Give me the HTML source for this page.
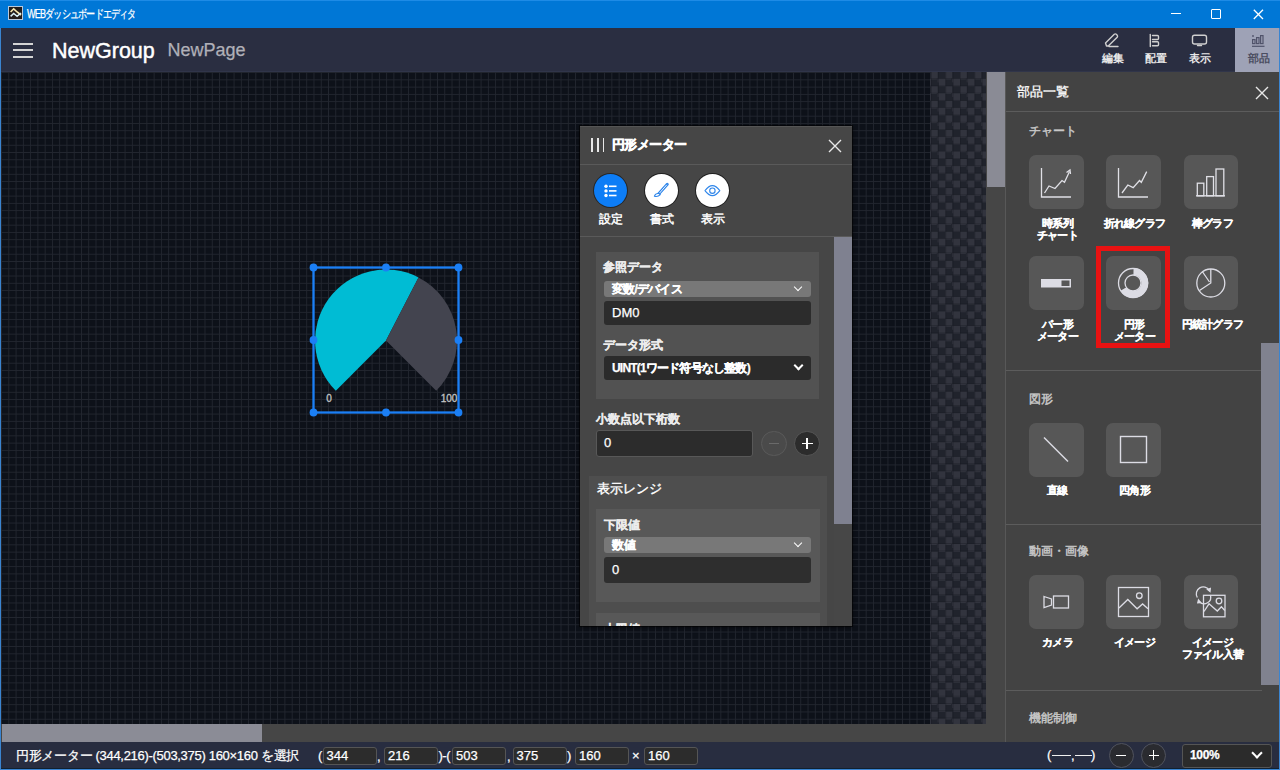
<!DOCTYPE html>
<html lang="ja">
<head>
<meta charset="utf-8">
<style>
*{box-sizing:border-box;margin:0;padding:0}
html,body{width:1280px;height:770px;overflow:hidden;background:#3a84d0}
body{position:relative;font-family:"Liberation Sans",sans-serif;color:#fff;-webkit-text-stroke-width:0.25px}
.a{position:absolute}
/* title bar */
#tb{left:0;top:0;width:1280px;height:28px;background:#0077d6;box-shadow:inset 0 1px 0 #1e8be6}
/* app bar */
#ab{left:1px;top:28px;width:1278px;height:44px;background:#2a2e41;box-shadow:inset 0 -1px 0 #30354a}
/* canvas */
#cv{left:1px;top:72px;width:929px;height:652px;background-color:#0d1119;
 background-image:linear-gradient(90deg,#22262f 1px,transparent 1px),linear-gradient(0deg,#22262f 1px,transparent 1px);
 background-size:7.28px 7.28px;background-position:0.1px 8.3px}
#chk{left:930px;top:72px;width:56px;height:652px;background-color:#1f222b;
 background-image:linear-gradient(90deg,rgba(20,22,30,.35) 1px,transparent 1px),linear-gradient(0deg,rgba(20,22,30,.35) 1px,transparent 1px),conic-gradient(#20232c 25%,#32343e 0 50%,#20232c 0 75%,#32343e 0);
 background-size:7.28px 7.28px,7.28px 7.28px,14.56px 14.56px;background-position:0.9px 0,0 7.0px,0.9px -0.3px}
#hsb{left:1px;top:724px;width:1004px;height:18px;background:#464646}
#hth{left:2px;top:724px;width:260px;height:18px;background:#8b8c96}
#vsb{left:986px;top:72px;width:19px;height:652px;background:#464646}
#vth{left:987px;top:72px;width:18px;height:115px;background:#8a8b95}
/* status bar */
#sb{left:1px;top:742px;width:1278px;height:26px;background:#282d40;box-shadow:0 1px 0 #102030}
/* right panel */
#rp{left:1005px;top:72px;width:274px;height:670px;background:#434343;border-left:1px solid #585858}
.sep{position:absolute;height:1px;background:#5c5c5c}
.sec{position:absolute;font-size:12px;color:#c8c8c8;letter-spacing:0px;-webkit-text-stroke-width:0.45px}
.tile{position:absolute;width:54.5px;height:54px;border-radius:7px;background:#575757}
.tl{position:absolute;width:80px;text-align:center;font-size:10.5px;font-weight:bold;line-height:12.3px;color:#fff;letter-spacing:-0.8px;margin-left:1.5px;margin-top:0.5px}
/* dialog */
#dlg{left:580px;top:126px;width:272px;height:500px;background:#464646;overflow:hidden;box-shadow:0 0 0 1px rgba(0,0,0,.55),0 1px 5px rgba(0,0,0,.7),inset 0 1px 0 #555}
.grp{position:absolute}
.lbl{position:absolute;font-size:12px;color:#ececec;font-weight:bold;margin-top:1px}
.sel{position:absolute;border-radius:3px}
.inp{position:absolute;border-radius:3px;background:#2c2c2c}
.sin{position:absolute;top:747px;width:54px;height:18px;background:#2c2c2c;border:1px solid #555;border-radius:3px;font-size:13px;line-height:16px;color:#fff;padding-left:3px}
.chev{position:absolute;width:7px;height:7px;border-right:1.6px solid #fff;border-bottom:1.6px solid #fff;transform:rotate(45deg)}
</style>
</head>
<body>
<div id="tb" class="a"></div>
<!-- app icon -->
<div class="a" style="left:8px;top:6px;width:14.5px;height:13.5px;background:#221d1c;border:1px solid #b8c8dc"></div>
<svg class="a" style="left:8px;top:6px" width="15" height="14" viewBox="8 6 15 14"><polyline points="10.6,12 13.7,8.8 17.1,12 21,15" fill="none" stroke="#f6e8b0" stroke-width="1.6"/><polyline points="10.6,16.3 13.7,13.5 17.1,16.3 21,13" fill="none" stroke="#d8f0f8" stroke-width="1.6"/></svg>
<div class="a" style="left:27px;top:7px;font-size:12px;line-height:14px;color:#fff;letter-spacing:-1.1px;white-space:nowrap;transform:scaleX(0.755);transform-origin:0 0">WEBダッシュボードエディタ</div>
<!-- window controls -->
<div class="a" style="left:1171px;top:13px;width:9.5px;height:1.4px;background:#fff"></div>
<div class="a" style="left:1211.3px;top:9.2px;width:9.6px;height:9.6px;border:1.3px solid #fff;border-radius:1px"></div>
<svg class="a" style="left:1253px;top:9px" width="11" height="11" viewBox="0 0 11 11"><path d="M0.8,0.8 L10,10 M10,0.8 L0.8,10" stroke="#fff" stroke-width="1.3"/></svg>

<div id="ab" class="a"></div>
<!-- hamburger -->
<div class="a" style="left:13px;top:42.5px;width:20px;height:2px;background:#d4d4d4"></div>
<div class="a" style="left:13px;top:49px;width:20px;height:2px;background:#d4d4d4"></div>
<div class="a" style="left:13px;top:55.5px;width:20px;height:2px;background:#d4d4d4"></div>
<div class="a" style="left:52px;top:38.5px;font-size:21.5px;line-height:25px;color:#fff;white-space:nowrap;-webkit-text-stroke-width:0.45px">NewGroup</div>
<div class="a" style="left:167.5px;top:40px;font-size:18px;line-height:21px;color:#b0b0b8;white-space:nowrap">NewPage</div>
<!-- toolbar buttons -->
<div class="a" style="left:1235px;top:28px;width:44px;height:44px;background:#9ea2b6"></div>
<svg class="a" style="left:1100px;top:32px" width="180" height="18" viewBox="1100 32 180 18">
 <g fill="none" stroke="#cfcfcf" stroke-width="1.4" stroke-linecap="round" stroke-linejoin="round">
  <path d="M1106.5,46 L1105.5,43 L1114.3,34.3 Q1115.3,33.5 1116.3,34.3 L1117.2,35.2 Q1118,36.2 1117.2,37.2 L1108.5,45.8 Z M1109,46.5 L1118,46.5"/>
  <path d="M1150.3,34.5 L1150.3,46.5"/>
  <path d="M1152.5,35.5 L1157.5,35.5 Q1158.5,35.5 1158.5,36.5 L1158.5,38.5 Q1158.5,39.5 1157.5,39.5 L1152.5,39.5 M1152.5,41.8 L1157.5,41.8 Q1158.5,41.8 1158.5,42.8 L1158.5,44.8 Q1158.5,45.8 1157.5,45.8 L1152.5,45.8"/>
  <rect x="1192.5" y="35.3" width="14" height="8.7" rx="2"/>
  <path d="M1197.5,45.5 L1201.5,45.5"/>
 </g>
 <g fill="none" stroke="#50536a" stroke-width="1.2">
  <circle cx="1253" cy="36" r="0.9" fill="#50536a" stroke="none"/>
  <rect x="1252.6" y="39.6" width="2.4" height="4"/>
  <rect x="1256.6" y="37.6" width="2.4" height="6"/>
  <rect x="1260.6" y="35.6" width="2.4" height="8"/>
  <path d="M1252,46.3 L1264.5,46.3"/>
 </g>
</svg>
<div class="a" style="left:1101.5px;top:51.5px;font-size:10.5px;line-height:13px;color:#e8e8e8;font-weight:bold;white-space:nowrap;-webkit-text-stroke-width:0">編集</div>
<div class="a" style="left:1145px;top:51.5px;font-size:10.5px;line-height:13px;color:#e8e8e8;font-weight:bold;white-space:nowrap;-webkit-text-stroke-width:0">配置</div>
<div class="a" style="left:1189px;top:51.5px;font-size:10.5px;line-height:13px;color:#e8e8e8;font-weight:bold;white-space:nowrap;-webkit-text-stroke-width:0">表示</div>
<div class="a" style="left:1247.5px;top:51.5px;font-size:10.5px;line-height:13px;color:#4a4d60;font-weight:bold;white-space:nowrap;-webkit-text-stroke-width:0">部品</div>

<!-- canvas -->
<div id="cv" class="a"></div>
<div id="chk" class="a"></div>
<div id="hsb" class="a"></div>
<div id="hth" class="a"></div>
<div id="vsb" class="a"></div>
<div id="vth" class="a"></div>

<!-- gauge -->
<svg class="a" style="left:300px;top:255px" width="175" height="175" viewBox="300 255 175 175">
 <path d="M386,340.5 L335.8,390.7 A71,71 0 0 1 418.5,277.4 Z" fill="#00bcd4"/>
 <path d="M386,340.5 L418.5,277.4 A71,71 0 0 1 436.2,390.7 Z" fill="#43444f"/>
 <text x="329" y="402" font-family="Liberation Sans" font-size="10" fill="#c4c4c4" stroke="#c4c4c4" stroke-width="0.3" text-anchor="middle">0</text>
 <text x="449" y="402" font-family="Liberation Sans" font-size="10" fill="#c4c4c4" stroke="#c4c4c4" stroke-width="0.3" text-anchor="middle">100</text>
 <rect x="313.5" y="267.5" width="145" height="145" fill="none" stroke="#1b7ff5" stroke-width="2.3"/>
 <g fill="#1b7ff5">
  <circle cx="313.5" cy="267.5" r="3.9"/><circle cx="386" cy="267.5" r="3.9"/><circle cx="458.5" cy="267.5" r="3.9"/>
  <circle cx="313.5" cy="340" r="3.9"/><circle cx="458.5" cy="340" r="3.9"/>
  <circle cx="313.5" cy="412.5" r="3.9"/><circle cx="386" cy="412.5" r="3.9"/><circle cx="458.5" cy="412.5" r="3.9"/>
 </g>
</svg>

<!-- status bar -->
<div id="sb" class="a"></div>
<div class="a" style="left:16px;top:748px;font-size:13px;line-height:15px;color:#fff;white-space:nowrap;letter-spacing:-0.3px">円形メーター (344,216)-(503,375) 160×160 を選択</div>
<div class="a" style="left:318px;top:748px;font-size:13px;line-height:15px;color:#fff">(</div>
<div class="sin" style="left:322.5px">344</div>
<div class="a" style="left:377px;top:749px;font-size:13px;line-height:15px;color:#fff">,</div>
<div class="sin" style="left:384px">216</div>
<div class="a" style="left:438.5px;top:748px;font-size:13px;line-height:15px;color:#fff;letter-spacing:-0.5px">)-(</div>
<div class="sin" style="left:452px">503</div>
<div class="a" style="left:507px;top:749px;font-size:13px;line-height:15px;color:#fff">,</div>
<div class="sin" style="left:512.5px">375</div>
<div class="a" style="left:567px;top:748px;font-size:13px;line-height:15px;color:#fff">)</div>
<div class="sin" style="left:575px">160</div>
<div class="a" style="left:632px;top:748px;font-size:13px;line-height:15px;color:#fff">×</div>
<div class="sin" style="left:644px">160</div>
<div class="a" style="left:1047px;top:747px;font-size:13px;line-height:15px;color:#fff;white-space:nowrap">(</div>
<div class="a" style="left:1052px;top:755.2px;width:19px;height:1.3px;background:#f0f0f0"></div>
<div class="a" style="left:1071px;top:748px;font-size:13px;line-height:15px;color:#fff">,</div>
<div class="a" style="left:1074.5px;top:755.2px;width:17px;height:1.3px;background:#f0f0f0"></div>
<div class="a" style="left:1091px;top:747px;font-size:13px;line-height:15px;color:#fff">)</div>
<div class="a" style="left:1108.5px;top:742.5px;width:25px;height:25px;border-radius:50%;background:#2a2b30;border:1.5px solid #50535e"></div>
<div class="a" style="left:1116px;top:754.5px;width:10px;height:1.6px;background:#fff"></div>
<div class="a" style="left:1141px;top:742.5px;width:25px;height:25px;border-radius:50%;background:#2a2b30;border:1.5px solid #50535e"></div>
<div class="a" style="left:1148.5px;top:754.5px;width:10px;height:1.6px;background:#fff"></div>
<div class="a" style="left:1152.7px;top:750.3px;width:1.6px;height:10px;background:#fff"></div>
<div class="a" style="left:1181.5px;top:743.5px;width:90px;height:24.5px;background:#2b2b2b;border:1px solid #555;border-radius:3px"></div>
<div class="a" style="left:1190px;top:748px;font-size:12px;line-height:15px;color:#fff;font-weight:bold;letter-spacing:-0.3px">100%</div>
<div class="chev" style="left:1253px;top:749px;width:8px;height:8px;border-width:0 2px 2px 0"></div>

<!-- right panel -->
<div id="rp" class="a"></div>
<div class="a" style="left:1017px;top:84px;font-size:13px;line-height:16px;color:#fff;white-space:nowrap;-webkit-text-stroke-width:0.3px">部品一覧</div>
<svg class="a" style="left:1255px;top:86px" width="14" height="14" viewBox="0 0 14 14"><path d="M1,1 L13,13 M13,1 L1,13" stroke="#e8e8e8" stroke-width="1.4"/></svg>
<div class="sep" style="left:1006px;top:111px;width:273px"></div>
<div class="sec" style="left:1029px;top:124px;line-height:14px">チャート</div>
<div class="tile" style="left:1029px;top:155px"></div>
<div class="tile" style="left:1106px;top:155px"></div>
<div class="tile" style="left:1183.5px;top:155px"></div>
<svg class="a" style="left:1029px;top:155px" width="210" height="55" viewBox="1029 155 210 55">
 <g fill="none" stroke="#e0e0e6" stroke-width="1.3">
  <path d="M1041.5,168 L1041.5,197 L1071,197"/>
  <path d="M1044.5,193 L1049,186 L1055,188.5 L1062,180.5 L1064.5,182.3 L1069.5,171.5"/>
  <path d="M1066.5,172.5 L1070,170 L1070.5,174"/>
  <path d="M1118.5,168 L1118.5,197 L1148,197"/>
  <path d="M1122,193 L1127.8,185 L1133.2,187.7 L1139.5,180.5 L1141.3,182.3 L1146.7,171.6"/>
  <path d="M1196,195.8 L1225,195.8"/>
  <rect x="1197.3" y="183.2" width="6.5" height="12.6"/>
  <rect x="1206.7" y="176.6" width="6.8" height="19.2"/>
  <rect x="1216" y="169" width="7.8" height="26.8"/>
 </g>
</svg>
<div class="tl" style="left:1016px;top:216px">時系列<br>チャート</div>
<div class="tl" style="left:1093px;top:216px">折れ線グラフ</div>
<div class="tl" style="left:1171px;top:216px">棒グラフ</div>

<div class="tile" style="left:1029px;top:256px"></div>
<div class="tile" style="left:1106px;top:256px"></div>
<div class="tile" style="left:1183.5px;top:256px"></div>
<svg class="a" style="left:1029px;top:256px" width="210" height="55" viewBox="1029 256 210 55">
 <rect x="1041" y="279" width="30" height="8.5" fill="#dcdce4"/>
 <rect x="1061.5" y="280.5" width="8" height="5.5" fill="#575757"/>
 <circle cx="1133" cy="283" r="14.5" fill="none" stroke="#dcdce4" stroke-width="1.3"/>
 <circle cx="1133" cy="283" r="8" fill="none" stroke="#dcdce4" stroke-width="1.3"/>
 <path d="M1133.5,271.5 A11.5,11.5 0 1 1 1123.5,289" fill="none" stroke="#dcdce4" stroke-width="7"/>
 <circle cx="1210.8" cy="283" r="14" fill="none" stroke="#dcdce4" stroke-width="1.3"/>
 <path d="M1210.8,269 L1210.8,283 L1199.5,290.5 M1202.3,271.5 L1209.5,282" fill="none" stroke="#dcdce4" stroke-width="1.3"/>
</svg>
<div class="tl" style="left:1016px;top:317px">バー形<br>メーター</div>
<div class="tl" style="left:1093px;top:317px">円形<br>メーター</div>
<div class="tl" style="left:1171px;top:317px">円統計グラフ</div>
<div class="a" style="left:1095.5px;top:246px;width:74.5px;height:102px;border:5px solid #e81212"></div>

<div class="sep" style="left:1006px;top:370px;width:256px"></div>
<div class="sec" style="left:1029px;top:392px;line-height:14px">図形</div>
<div class="tile" style="left:1029px;top:422.5px"></div>
<div class="tile" style="left:1106px;top:422.5px"></div>
<svg class="a" style="left:1029px;top:422px" width="140" height="56" viewBox="1029 422 140 56">
 <path d="M1044,437.5 L1068,461.5" stroke="#dcdce4" stroke-width="1.4"/>
 <rect x="1120.5" y="436.5" width="26" height="26" fill="none" stroke="#dcdce4" stroke-width="1.4"/>
</svg>
<div class="tl" style="left:1016px;top:483px">直線</div>
<div class="tl" style="left:1093px;top:483px">四角形</div>

<div class="sep" style="left:1006px;top:524px;width:256px"></div>
<div class="sec" style="left:1029px;top:544px;line-height:14px">動画・画像</div>
<div class="tile" style="left:1029px;top:574.5px"></div>
<div class="tile" style="left:1106px;top:574.5px"></div>
<div class="tile" style="left:1183.5px;top:574.5px"></div>
<svg class="a" style="left:1029px;top:574px" width="210" height="56" viewBox="1029 574 210 56">
 <g fill="none" stroke="#dcdce4" stroke-width="1.3">
  <path d="M1044,596.5 L1051.5,599 L1051.5,605 L1044,607.5 Z"/>
  <rect x="1053.5" y="596" width="15" height="12"/>
  <rect x="1118.5" y="587.5" width="30" height="29"/>
  <path d="M1119,608 L1127.8,599.5 L1137.1,608.8 L1142.6,603.9 L1148,608.8"/>
  <circle cx="1139.3" cy="595.7" r="2.8"/>
  <rect x="1203.5" y="595.3" width="21.5" height="21.5"/>
  <path d="M1204,611.5 L1209,603.8 L1217.3,611 L1221.4,606.8 L1224.8,610.5"/>
  <circle cx="1219" cy="601" r="2.8"/>
  <path d="M1197.3,597.5 A6.5,6.5 0 0 1 1209.3,590.3"/>
  <path d="M1210.3,595 A6.5,6.5 0 0 1 1199.3,601.5"/>
  <path d="M1207.5,589.5 L1210.3,588.5 L1210,591.5 Z M1200.5,602.5 L1197.8,602.8 L1198.5,600 Z" fill="#dcdce4"/>
 </g>
</svg>
<div class="tl" style="left:1016px;top:635px">カメラ</div>
<div class="tl" style="left:1093px;top:635px">イメージ</div>
<div class="tl" style="left:1171px;top:635px">イメージ<br>ファイル入替</div>
<div class="sep" style="left:1006px;top:690px;width:256px"></div>
<div class="sec" style="left:1029px;top:711px;line-height:14px">機能制御</div>
<div class="a" style="left:1261px;top:343px;width:18px;height:342px;background:#80828f"></div>

<!-- dialog -->
<div id="dlg" class="a">
 <!-- coordinates inside dialog: subtract (580,126) -->
 <div class="a" style="left:11.3px;top:12px;width:1.6px;height:14px;background:#e8e8e8"></div>
 <div class="a" style="left:17px;top:12px;width:1.6px;height:14px;background:#e8e8e8"></div>
 <div class="a" style="left:22.7px;top:12px;width:1.6px;height:14px;background:#e8e8e8"></div>
 <div class="a" style="left:32px;top:11px;font-size:13px;line-height:16px;font-weight:bold;color:#fff;white-space:nowrap;letter-spacing:-0.6px;-webkit-text-stroke:0.5px #fff">円形メーター</div>
 <svg class="a" style="left:248px;top:13px" width="14" height="14" viewBox="0 0 14 14"><path d="M1,1 L13,13 M13,1 L1,13" stroke="#e8e8e8" stroke-width="1.4"/></svg>
 <div class="a" style="left:0;top:38px;width:272px;height:1px;background:#5a5a5a"></div>
 <!-- tabs -->
 <div class="a" style="left:14px;top:48px;width:33px;height:33px;border-radius:50%;background:#0d7df6;box-shadow:0 0 0 1px rgba(0,0,0,.45)"></div>
 <div class="a" style="left:64.5px;top:48px;width:33px;height:33px;border-radius:50%;background:#fff;box-shadow:0 0 0 1px rgba(0,0,0,.55)"></div>
 <div class="a" style="left:115.5px;top:48px;width:33px;height:33px;border-radius:50%;background:#fff;box-shadow:0 0 0 1px rgba(0,0,0,.55)"></div>
 <svg class="a" style="left:14px;top:48px" width="140" height="33" viewBox="0 0 140 33">
  <g fill="#fff"><circle cx="12" cy="12.3" r="1.7"/><circle cx="12" cy="16.9" r="1.7"/><circle cx="12" cy="21.5" r="1.7"/>
  <rect x="15" y="11.5" width="7.5" height="1.6"/><rect x="15" y="16.1" width="7.5" height="1.6"/><rect x="15" y="20.7" width="7.5" height="1.6"/></g>
  <g fill="none" stroke="#2f86ea" stroke-width="1.1" stroke-linejoin="round">
  <path d="M73.3,10.3 L64.8,19.8" stroke-width="3" stroke-linecap="round"/>
  <path d="M72.8,10.8 L65.3,19.3" stroke="#fff" stroke-width="0.9"/>
  <path d="M64.5,19.2 Q61.2,19.6 60.4,22.2 Q63.6,23.4 66.3,20.6 Z" fill="#fff"/>
  <path d="M111,16.6 Q118.4,6.6 125.8,16.6 Q118.4,26.6 111,16.6 Z"/><circle cx="118.4" cy="16.7" r="2.7"/></g>
 </svg>
 <div class="a" style="left:19px;top:86px;font-size:12px;line-height:14px;color:#fff;white-space:nowrap;-webkit-text-stroke-width:0.45px">設定</div>
 <div class="a" style="left:69.5px;top:86px;font-size:12px;line-height:14px;color:#fff;white-space:nowrap;-webkit-text-stroke-width:0.45px">書式</div>
 <div class="a" style="left:120.5px;top:86px;font-size:12px;line-height:14px;color:#fff;white-space:nowrap;-webkit-text-stroke-width:0.45px">表示</div>
 <div class="a" style="left:0;top:110px;width:272px;height:1px;background:#5a5a5a"></div>
 <!-- scrollbar -->
 <div class="a" style="left:254px;top:111px;width:18px;height:389px;background:#474747"></div>
 <div class="a" style="left:254px;top:111px;width:18px;height:287px;background:#7f8190"></div>
 <!-- group 1 -->
 <div class="a" style="left:15.5px;top:125.5px;width:223.5px;height:147px;background:#525252"></div>
 <div class="lbl" style="left:23px;top:133px;line-height:14px">参照データ</div>
 <div class="sel" style="left:24px;top:155px;width:207px;height:15.5px;background:#787878"></div>
 <div class="a" style="left:32px;top:155px;font-size:12px;line-height:16px;color:#fff;white-space:nowrap;letter-spacing:-0.8px;font-weight:bold">変数/デバイス</div>
 <div class="chev" style="left:215px;top:157.5px;width:6px;height:6px;border-width:0 1.8px 1.8px 0"></div>
 <div class="inp" style="left:24px;top:175px;width:207px;height:23.5px;background:#2c2c2c"></div>
 <div class="a" style="left:32px;top:179px;font-size:13px;line-height:16px;color:#fff;white-space:nowrap">DM0</div>
 <div class="lbl" style="left:23px;top:211px;line-height:14px">データ形式</div>
 <div class="inp" style="left:24px;top:230px;width:207px;height:23.5px;background:#2b2b2b"></div>
 <div class="a" style="left:32px;top:234px;font-size:12px;line-height:16px;color:#fff;font-weight:bold;white-space:nowrap;letter-spacing:-0.8px">UINT(1ワード符号なし整数)</div>
 <div class="chev" style="left:214.5px;top:236px;width:7px;height:7px;border-width:0 2px 2px 0"></div>
 <!-- decimals -->
 <div class="lbl" style="left:16px;top:285px;line-height:14px">小数点以下桁数</div>
 <div class="inp" style="left:16px;top:304px;width:157px;height:27px;background:#2c2c2c;border:1px solid #585858"></div>
 <div class="a" style="left:24px;top:309px;font-size:13px;line-height:16px;color:#fff">0</div>
 <div class="a" style="left:181px;top:304.5px;width:25.5px;height:25.5px;border-radius:50%;background:#4a4a4a;border:1px solid #5a5a5a"></div>
 <div class="a" style="left:188.5px;top:316.5px;width:10px;height:1.3px;background:#6a6a6a"></div>
 <div class="a" style="left:214px;top:304.5px;width:25.5px;height:25.5px;border-radius:50%;background:#2c2c2c;border:1px solid #555"></div>
 <div class="a" style="left:221.5px;top:316.5px;width:11px;height:1.6px;background:#fff"></div>
 <div class="a" style="left:226.2px;top:311.8px;width:1.6px;height:11px;background:#fff"></div>
 <!-- range group -->
 <div class="a" style="left:8.5px;top:350px;width:238px;height:160px;background:#4e4e4e"></div>
 <div class="a" style="left:17px;top:355px;font-size:13px;line-height:16px;color:#fff;white-space:nowrap;-webkit-text-stroke-width:0.4px">表示レンジ</div>
 <div class="a" style="left:16px;top:382.5px;width:223.5px;height:93px;background:#585858"></div>
 <div class="lbl" style="left:24px;top:391px;line-height:14px">下限値</div>
 <div class="sel" style="left:24px;top:411px;width:207px;height:16px;background:#787878"></div>
 <div class="a" style="left:32px;top:411px;font-size:12px;line-height:16px;color:#fff;white-space:nowrap;font-weight:bold">数値</div>
 <div class="chev" style="left:215px;top:413.5px;width:6px;height:6px;border-width:0 1.8px 1.8px 0"></div>
 <div class="inp" style="left:24px;top:431px;width:207px;height:26px;background:#2e2e2e"></div>
 <div class="a" style="left:32px;top:436px;font-size:13px;line-height:16px;color:#fff">0</div>
 <div class="a" style="left:16px;top:487px;width:223.5px;height:20px;background:#585858"></div>
 <div class="lbl" style="left:24px;top:495px;line-height:14px">上限値</div>
</div>

</body>
</html>
